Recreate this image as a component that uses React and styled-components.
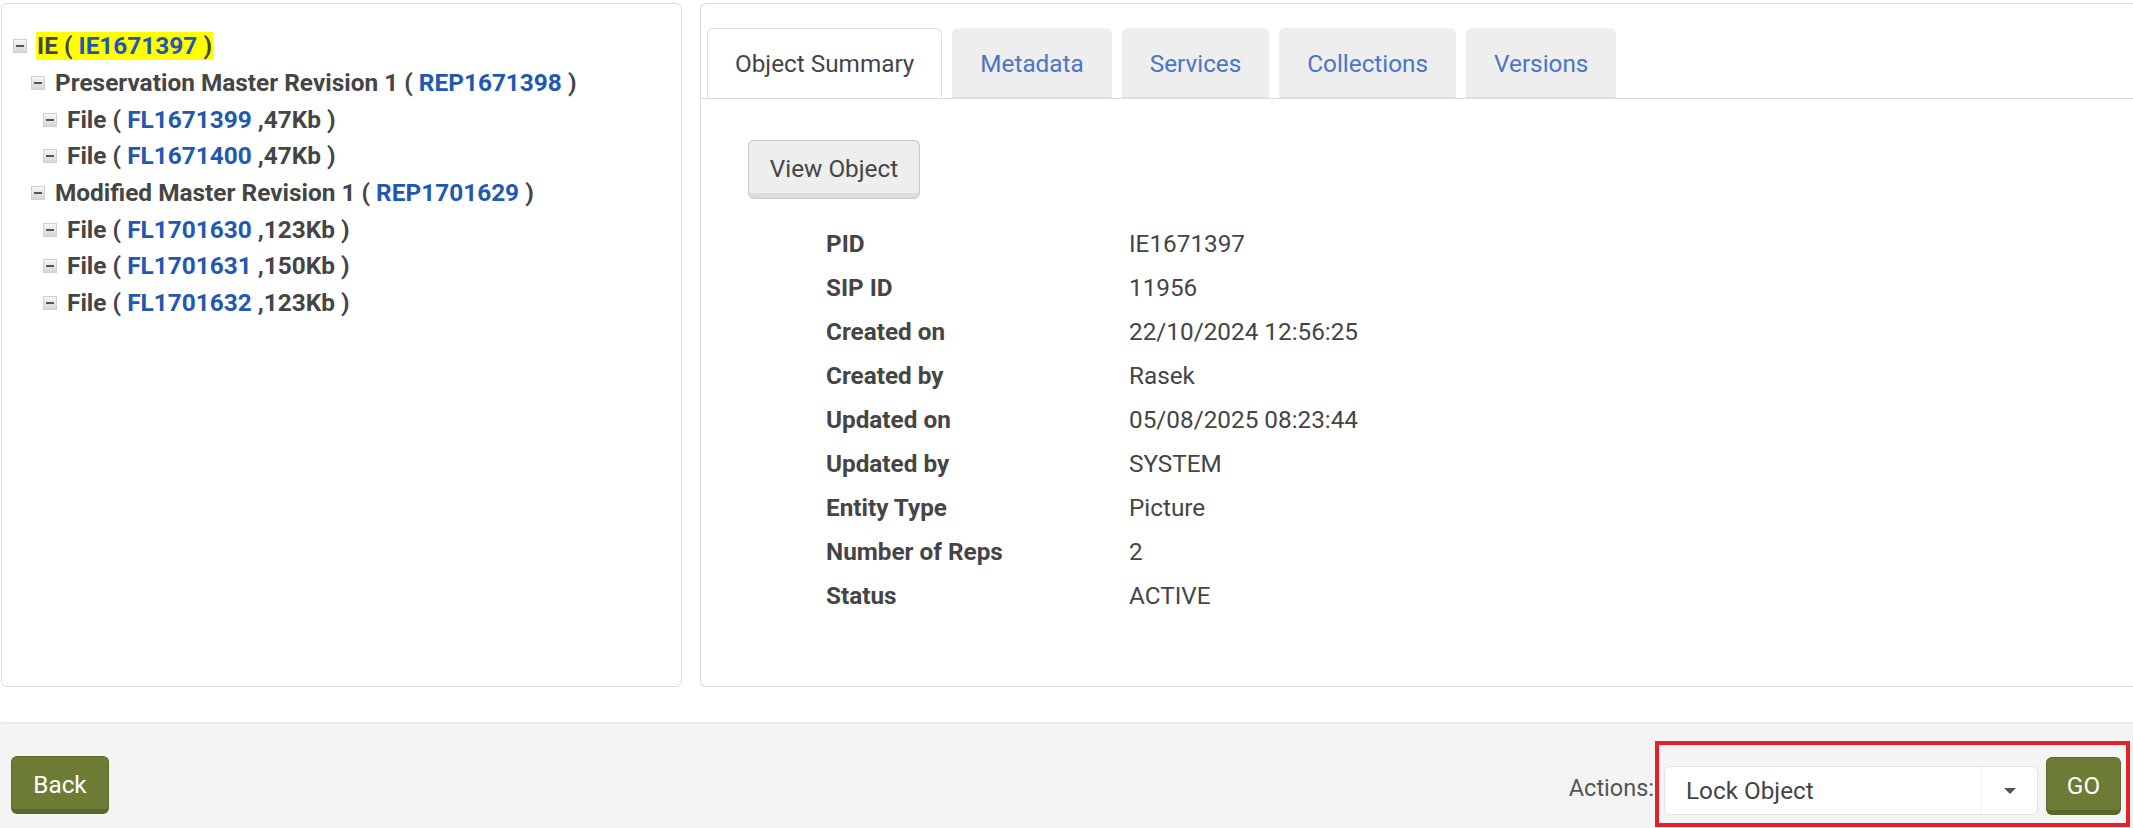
import React from "react";
import styled, { createGlobalStyle } from "styled-components";

const GlobalStyle = createGlobalStyle`
  html, body {
    margin: 0;
    padding: 0;
    background: #fff;
    font-family: Roboto, "Liberation Sans", Arial, sans-serif;
    color: #444;
    overflow: hidden;
  }
`;

const Page = styled.div`
  width: 2133px;
  height: 828px;
  display: flex;
  flex-direction: column;
`;

const Main = styled.div`
  display: flex;
  gap: 18px;
  padding: 3px 0 0 1px;
  height: 687px;
  box-sizing: border-box;
`;

const TreePanel = styled.div`
  width: 681px;
  flex-shrink: 0;
  border: 1px solid #dcdce0;
  border-radius: 6px;
  box-sizing: border-box;
  padding-top: 24px;
`;

const TreeRow = styled.div`
  display: flex;
  align-items: center;
  height: 36.7px;
  padding-left: ${(p) => p.$indent}px;
  font-size: 24.4px;
  font-weight: 700;
  color: #454545;
  white-space: nowrap;
`;

const Toggle = styled.span`
  width: 14px;
  height: 14px;
  margin-right: 9px;
  box-sizing: border-box;
  border: 1px solid #d0d0d0;
  background: linear-gradient(#f6f6f6, #d6d6d6);
  display: flex;
  align-items: center;
  justify-content: center;
  flex-shrink: 0;
  &::after {
    content: "";
    width: 8px;
    height: 2px;
    background: #555;
  }
`;

const Label = styled.span`
  background: ${(p) => (p.$selected ? "#ffff00" : "transparent")};
  padding: 0 1px;
  line-height: 28px;
`;

const IdLink = styled.span`
  color: #2258b2;
`;

const DetailPanel = styled.div`
  flex: 1;
  border: 1px solid #dcdce0;
  border-right: none;
  border-radius: 6px 0 0 6px;
  box-sizing: border-box;
  padding-top: 24px;
`;

const TabBar = styled.div`
  display: flex;
  gap: 10px;
  padding-left: 6px;
  border-bottom: 1px solid #ddd;
  height: 70px;
`;

const Tab = styled.div`
  height: 70px;
  box-sizing: border-box;
  padding: 0 27px;
  display: flex;
  align-items: center;
  font-size: 24.3px;
  border-radius: 6px 6px 0 0;
  border: 1px solid ${(p) => (p.$active ? "#ddd" : "#eee")};
  border-bottom: ${(p) => (p.$active ? "1px solid #fff" : "1px solid #ddd")};
  background: ${(p) => (p.$active ? "#fff" : "#eee")};
  color: ${(p) => (p.$active ? "#454545" : "#4a76c4")};
  margin-bottom: -1px;
`;

const TabBody = styled.div`
  padding: 41px 0 0 47px;
`;

const GreyButton = styled.button`
  font-family: inherit;
  font-size: 24.3px;
  color: #454545;
  width: 172px;
  height: 58px;
  background: #eee;
  border: 1px solid #c8c8c8;
  border-bottom: 5px solid #dcdcdc;
  box-shadow: 0 1px 0 #c8c8c8;
  border-radius: 6px;
  padding: 2px 0 0;
  cursor: pointer;
`;

const Summary = styled.div`
  display: grid;
  grid-template-columns: 303px auto;
  margin: 23px 0 0 78px;
  grid-auto-rows: 44px;
  align-items: center;
  font-size: 24.3px;
  color: #454545;
`;

const Key = styled.div`
  font-weight: 700;
`;

const Value = styled.div`
  font-weight: 400;
`;

const Footer = styled.div`
  flex: 1;
  margin-top: 35px;
  background: #f4f4f4;
  box-shadow: inset 0 3px 3px -2px #e2e2e2;
  display: flex;
  justify-content: space-between;
  align-items: flex-start;
  padding: 0 3px 0 11px;
`;

const OliveButton = styled.button`
  font-family: inherit;
  font-size: 24.3px;
  color: #fff;
  height: 58px;
  width: ${(p) => p.$w}px;
  margin-top: ${(p) => p.$top || 0}px;
  background: #6d7c35;
  border: 1px solid #5b6a2b;
  border-bottom: 5px solid #5a6829;
  border-radius: 6px;
  padding: 2px 0 0;
  cursor: pointer;
`;

const ActionGroup = styled.div`
  display: flex;
  align-items: center;
  margin-top: 19px;
`;

const ActionsLabel = styled.span`
  font-size: 23.5px;
  color: #555;
  margin: 8px 1px 0 0;
`;

const Highlight = styled.div`
  border: 4px solid #e42126;
  display: flex;
  align-items: flex-end;
  gap: 8px;
  padding: 12px 5px 8px 5px;
`;

const Select = styled.div`
  width: 374px;
  height: 49px;
  box-sizing: border-box;
  background: #fff;
  border: 1px solid #e2e2e2;
  border-radius: 6px;
  display: flex;
  align-items: center;
  font-size: 24.3px;
  color: #454545;
`;

const SelectText = styled.span`
  flex: 1;
  padding-left: 21px;
  height: 100%;
  display: flex;
  align-items: center;
  border-right: 1px solid #f3f3f3;
`;

const Caret = styled.span`
  width: 55px;
  display: flex;
  justify-content: center;
  &::after {
    content: "";
    border-left: 6px solid transparent;
    border-right: 6px solid transparent;
    border-top: 6px solid #555;
  }
`;

const tree = [
  { indent: 11, name: "IE", id: "IE1671397", selected: true },
  { indent: 29, name: "Preservation Master Revision 1", id: "REP1671398" },
  { indent: 41, name: "File", id: "FL1671399", size: "47Kb" },
  { indent: 41, name: "File", id: "FL1671400", size: "47Kb" },
  { indent: 29, name: "Modified Master Revision 1", id: "REP1701629" },
  { indent: 41, name: "File", id: "FL1701630", size: "123Kb" },
  { indent: 41, name: "File", id: "FL1701631", size: "150Kb" },
  { indent: 41, name: "File", id: "FL1701632", size: "123Kb" },
];

const tabs = ["Object Summary", "Metadata", "Services", "Collections", "Versions"];

const summary = [
  ["PID", "IE1671397"],
  ["SIP ID", "11956"],
  ["Created on", "22/10/2024 12:56:25"],
  ["Created by", "Rasek"],
  ["Updated on", "05/08/2025 08:23:44"],
  ["Updated by", "SYSTEM"],
  ["Entity Type", "Picture"],
  ["Number of Reps", "2"],
  ["Status", "ACTIVE"],
];

export default function App() {
  return (
    <Page>
      <GlobalStyle />
      <Main>
        <TreePanel>
          {tree.map((node, i) => (
            <TreeRow key={i} $indent={node.indent}>
              <Toggle />
              <Label $selected={node.selected}>
                {node.name} ( <IdLink>{node.id}</IdLink>
                {node.size ? ` ,${node.size}` : ""} )
              </Label>
            </TreeRow>
          ))}
        </TreePanel>
        <DetailPanel>
          <TabBar>
            {tabs.map((t, i) => (
              <Tab key={t} $active={i === 0}>
                {t}
              </Tab>
            ))}
          </TabBar>
          <TabBody>
            <GreyButton>View Object</GreyButton>
            <Summary>
              {summary.map(([k, v]) => (
                <React.Fragment key={k}>
                  <Key>{k}</Key>
                  <Value>{v}</Value>
                </React.Fragment>
              ))}
            </Summary>
          </TabBody>
        </DetailPanel>
      </Main>
      <Footer>
        <OliveButton $w={98} $top={34}>
          Back
        </OliveButton>
        <ActionGroup>
          <ActionsLabel>Actions:</ActionsLabel>
          <Highlight>
            <Select>
              <SelectText>Lock Object</SelectText>
              <Caret />
            </Select>
            <OliveButton $w={75}>GO</OliveButton>
          </Highlight>
        </ActionGroup>
      </Footer>
    </Page>
  );
}
